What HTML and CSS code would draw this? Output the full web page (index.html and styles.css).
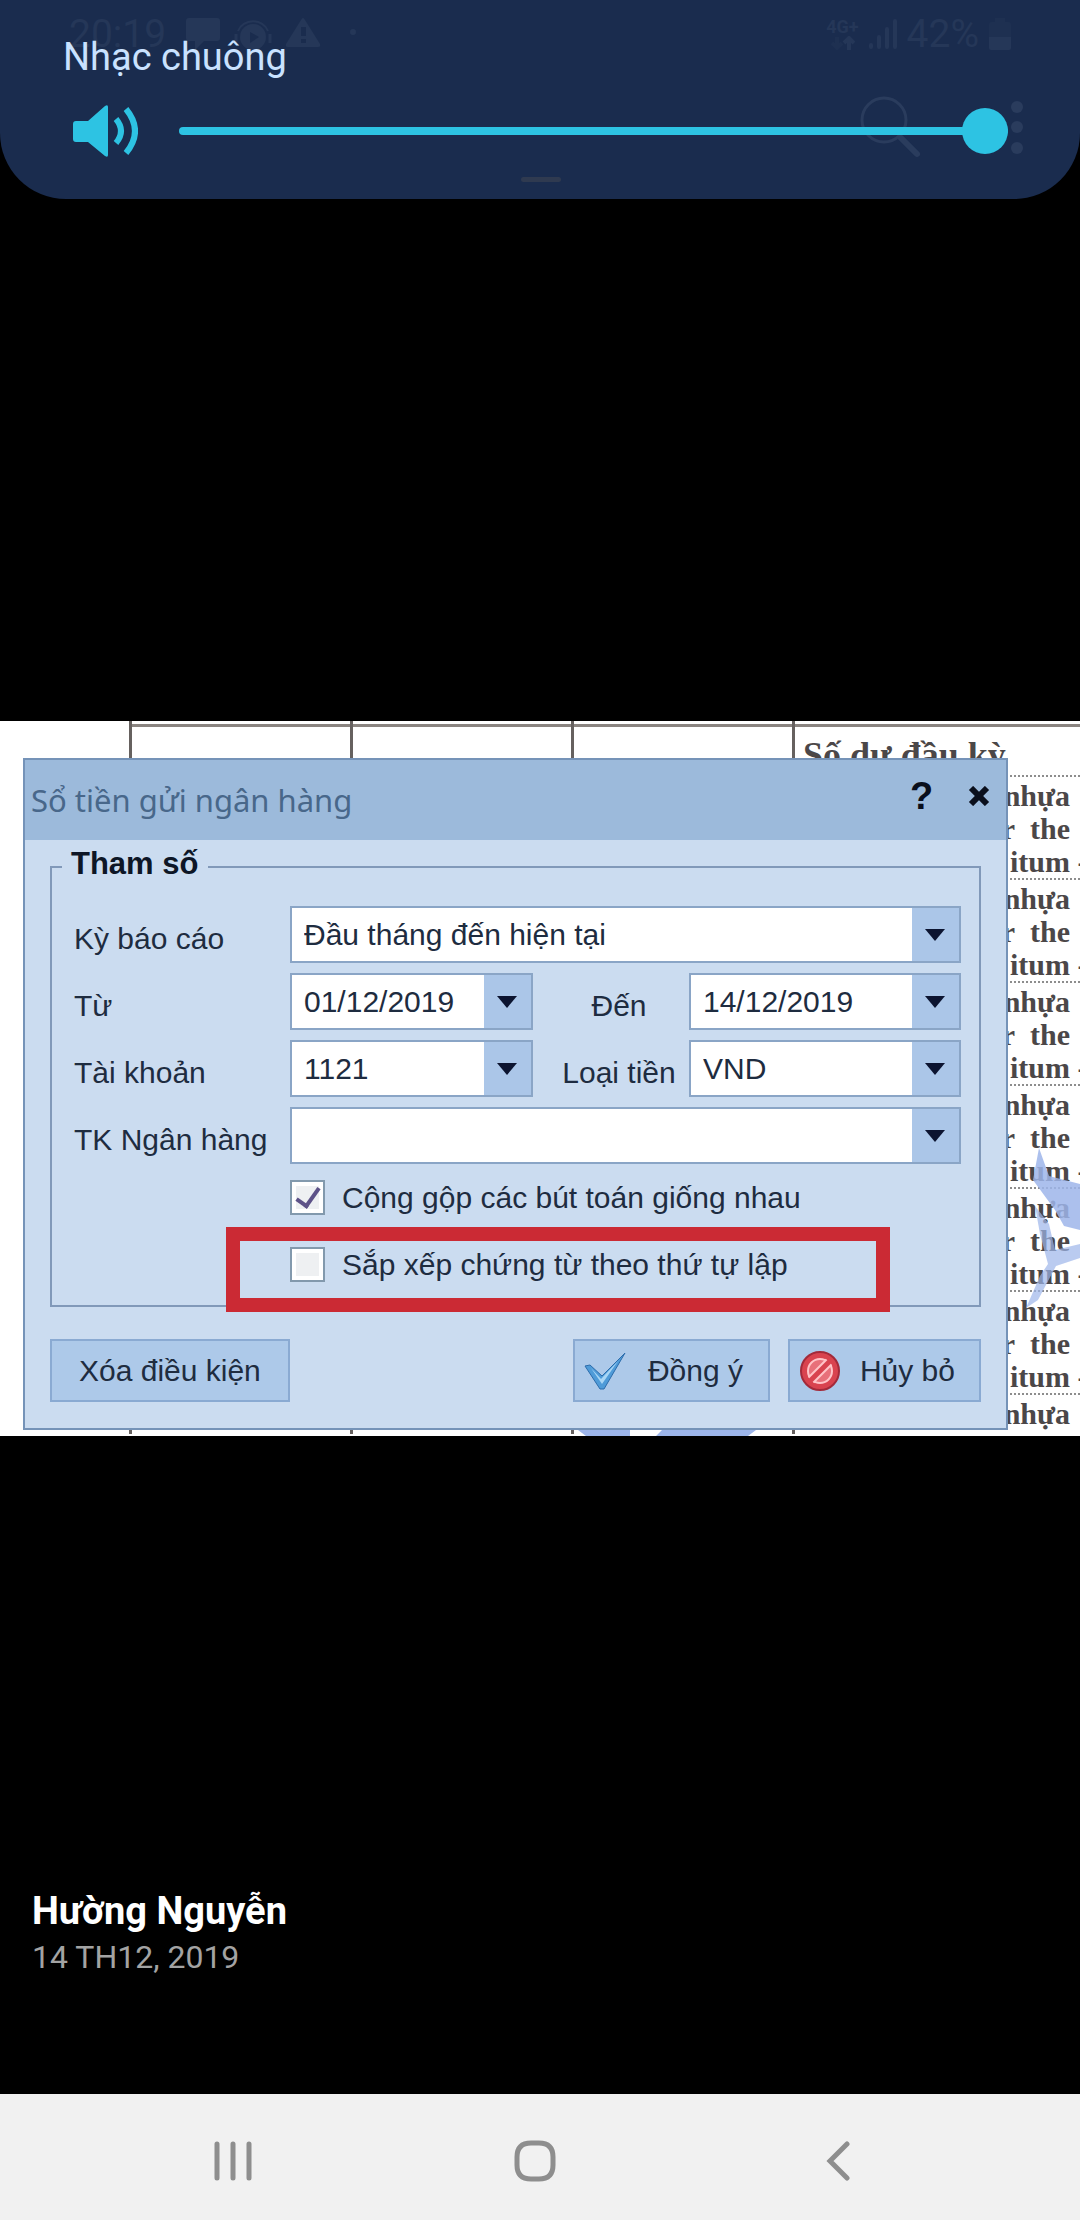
FILE: index.html
```html
<!DOCTYPE html>
<html lang="vi">
<head>
    <meta charset="UTF-8">
    <meta name="viewport" content="width=device-width, initial-scale=1.0">
    <title>Hường Nguyễn</title>
    <link rel="stylesheet" href="styles.css">
</head>
<body>
    <!-- Volume panel, with the dimmed status bar behind it -->
    <header class="volume-panel">
        <div class="status-bar">
            <span class="clock">20:19</span>
            <svg class="status-icons" width="172" height="34" viewBox="0 0 172 34" fill="currentColor">
                <path d="M3 1h28q3 0 3 3v17q0 3-3 3H18L9 33V24H3q-3 0-3-3V4q0-3 3-3z"/>
                <circle cx="67" cy="20" r="13"/>
                <path d="M52 14a16 15 0 0 1 30 0" fill="none" stroke="currentColor" stroke-width="2"/>
                <path d="M50 17v9M84 17v9" stroke="currentColor" stroke-width="3"/>
                <path class="hole" d="M64 15l9 5-9 6z"/>
                <path d="M117 1q1 0 2 2l15 24q1 3-2 3h-30q-3 0-2-3l15-24q1-2 2-2z"/>
                <path class="hole" d="M115 10h5v9h-5zM115 22h5v4h-5z"/>
                <circle cx="167" cy="15" r="3"/>
            </svg>
            <span class="spacer"></span>
            <span class="network">4G+
                <svg width="24" height="14" viewBox="0 0 24 14" fill="none" stroke="currentColor" stroke-width="4">
                    <path d="M6 1v11M1 7l5 5 5-5" opacity=".4"/>
                    <path d="M18 14V2M13 7l5-5 5 5"/>
                </svg>
            </span>
            <svg width="28" height="32" viewBox="0 0 28 32" stroke="currentColor" stroke-width="4" stroke-linecap="round">
                <path d="M2 27v2M10 19v10M18 11v18M26 3v26"/>
            </svg>
            <span class="clock">42%</span>
            <svg width="22" height="34" viewBox="0 0 22 34" fill="currentColor">
                <path d="M6 1h10v4h3q3 0 3 3v12H0V8q0-3 3-3h3z" opacity=".4"/>
                <path d="M0 20h22v11q0 2-2 2H2q-2 0-2-2z"/>
            </svg>
        </div>
        <svg class="toolbar-icons" width="164" height="64" viewBox="0 0 164 64" fill="currentColor">
            <circle cx="24" cy="25" r="22" fill="none" stroke="currentColor" stroke-width="3"/>
            <path d="M41 43l16 16" stroke="currentColor" stroke-width="6" stroke-linecap="round"/>
            <circle cx="157" cy="12" r="6"/>
            <circle cx="157" cy="32" r="6"/>
            <circle cx="157" cy="53" r="6"/>
        </svg>

        <label class="volume-label" for="volume">Nhạc chuông</label>
        <div class="volume-row">
            <svg width="65" height="52" viewBox="0 0 65 52" fill="#2dc3e3">
                <path d="M3 16h12L32 1q3-2 3 1v48q0 3-3 1L15 37H3q-3 0-3-3V19q0-3 3-3z"/>
                <path d="M43 14q10 12 0 24M53 4q18 22 0 44" fill="none" stroke="#2dc3e3" stroke-width="6"/>
            </svg>
            <input type="range" id="volume" min="0" max="100" value="100">
        </div>
        <span class="grip"></span>
    </header>

    <main>
        <section class="photo">
            <!-- Report behind the dialog -->
            <table class="report">
                <tr class="report-top"><td></td><td></td><td></td><td></td></tr>
                <tr class="report-head"><td></td><td></td><td></td><td>Số dư đầu kỳ</td></tr>
                <tr><td></td><td></td><td></td><td><p>nhựa</p><p>r&nbsp; the</p><p class="cut">itum<span>&nbsp;-</span></p></td></tr>
                <tr><td></td><td></td><td></td><td><p>nhựa</p><p>r&nbsp; the</p><p class="cut">itum<span>&nbsp;-</span></p></td></tr>
                <tr><td></td><td></td><td></td><td><p>nhựa</p><p>r&nbsp; the</p><p class="cut">itum<span>&nbsp;-</span></p></td></tr>
                <tr><td></td><td></td><td></td><td><p>nhựa</p><p>r&nbsp; the</p><p class="cut">itum<span>&nbsp;-</span></p></td></tr>
                <tr><td></td><td></td><td></td><td><p>nhựa</p><p>r&nbsp; the</p><p class="cut">itum<span>&nbsp;-</span></p></td></tr>
                <tr><td></td><td></td><td></td><td><p>nhựa</p><p>r&nbsp; the</p><p class="cut">itum<span>&nbsp;-</span></p></td></tr>
                <tr><td></td><td></td><td></td><td><p>nhựa</p></td></tr>
            </table>
            <svg class="watermark" width="73" height="170" viewBox="0 0 73 170" fill="#9db5ea">
                <path d="M32 2l10 28 31 8v46l-16-4-9-16-22-30z" opacity=".85"/>
                <path d="M28 60l14 18 6 26 25-6v14l-24 8-18 34-12 8 14-32 8-12-8-30z" opacity=".7"/>
            </svg>
            <svg class="watermark-foot" width="180" height="6" viewBox="0 0 180 6" fill="#9db5ea">
                <path d="M0 0h52v6H8zM84 0h94l-8 6H78z"/>
            </svg>

            <form class="dialog">
                <div class="title-bar">
                    <h1>Sổ tiền gửi ngân hàng</h1>
                    <button type="button" class="title-btn" aria-label="Trợ giúp">?</button>
                    <button type="button" class="title-btn" aria-label="Đóng">
                        <svg width="22" height="20" viewBox="0 0 22 20" stroke="#0a0f1c" stroke-width="6"><path d="M3 2l16 16M19 2L3 18"/></svg>
                    </button>
                </div>

                <fieldset>
                    <legend>Tham số</legend>
                    <div class="fields">
                        <label for="period">Kỳ báo cáo</label>
                        <div class="combo wide"><select id="period"><option>Đầu tháng đến hiện tại</option></select></div>

                        <label for="from">Từ</label>
                        <div class="combo"><select id="from"><option>01/12/2019</option></select></div>
                        <label for="to" class="second">Đến</label>
                        <div class="combo"><select id="to"><option>14/12/2019</option></select></div>

                        <label for="account">Tài khoản</label>
                        <div class="combo"><select id="account"><option>1121</option></select></div>
                        <label for="currency" class="second">Loại tiền</label>
                        <div class="combo"><select id="currency"><option>VND</option></select></div>

                        <label for="bank">TK Ngân hàng</label>
                        <div class="combo wide"><select id="bank"><option></option></select></div>
                    </div>
                    <div class="checks">
                        <div class="check">
                            <input type="checkbox" id="merge" checked>
                            <label for="merge">Cộng gộp các bút toán giống nhau</label>
                        </div>
                        <div class="check">
                            <input type="checkbox" id="sort">
                            <label for="sort">Sắp xếp chứng từ theo thứ tự lập</label>
                            <span class="highlight"></span>
                        </div>
                    </div>
                </fieldset>

                <div class="actions">
                    <button type="button" class="btn clear">Xóa điều kiện</button>
                    <button type="button" class="btn ok">
                        <svg width="42" height="38" viewBox="0 0 42 38">
                            <path d="M1 14l5-1 12 11L41 1 20 37h-4z" fill="#4f9bd8" stroke="#2c6cab" stroke-width="1"/>
                            <path d="M7 16l10 11L34 9 18 32z" fill="#a9d6f5"/>
                        </svg>
                        Đồng ý
                    </button>
                    <button type="button" class="btn cancel">
                        <svg width="42" height="42" viewBox="0 0 42 42" fill="none">
                            <circle cx="21" cy="21" r="19" fill="#d9434f" stroke="#a32a3a" stroke-width="2"/>
                            <circle cx="21" cy="21" r="12" fill="#e8707a" stroke="#ffc4c8" stroke-width="2"/>
                            <path d="M12 30L30 12" stroke="#ffc4c8" stroke-width="9"/>
                            <path d="M11 31L31 11" stroke="#d9434f" stroke-width="5"/>
                        </svg>
                        Hủy bỏ
                    </button>
                </div>
            </form>
        </section>

        <div class="caption">
            <strong>Hường Nguyễn</strong>
            <time datetime="2019-12-14">14 TH12, 2019</time>
        </div>
    </main>

    <!-- System navigation -->
    <nav class="nav-bar">
        <button type="button" aria-label="Gần đây">
            <svg width="40" height="40" viewBox="0 0 40 40"><path d="M4 3v34M20 3v34M36 3v34"/></svg>
        </button>
        <button type="button" aria-label="Trang chủ">
            <svg width="42" height="42" viewBox="0 0 42 42"><path d="M21 3h4q14 0 14 14v8q0 14-14 14h-8q-14 0-14-14v-8q0-14 14-14z"/></svg>
        </button>
        <button type="button" aria-label="Quay lại">
            <svg width="24" height="40" viewBox="0 0 24 40"><path d="M21 3L4 20l17 17"/></svg>
        </button>
    </nav>
</body>
</html>
```
FILE: styles.css
```css
* {
    box-sizing: border-box;
}

body {
    margin: 0;
    min-height: 100vh;
    display: flex;
    flex-direction: column;
    background-color: black;
    color: white;
    font-family: Roboto, "Noto Sans", sans-serif;
}

button {
    border: none;
    background: none;
    padding: 0;
    font: inherit;
    color: inherit;
}

svg {
    display: block;
    flex: none;
}

p {
    margin: 0;
}

/* Volume panel */
.volume-panel {
    position: relative;
    padding: 33px 72px 17px 73px;
    background-color: #1a2c4e;
    border-radius: 0 0 66px 66px;
    color: #c9e2ff;
}

.volume-label {
    display: block;
    margin-left: -10px;
    font-size: 38px;
    line-height: 48px;
    position: relative;
}

.volume-row {
    display: flex;
    align-items: center;
    gap: 41px;
    margin: 24px 0 20px;
    position: relative;
}

.volume-row input {
    flex: 1;
    min-width: 0;
    height: 46px;
    margin: 0;
    appearance: none;
    background: none;
}

.volume-row input::-webkit-slider-runnable-track {
    height: 8px;
    border-radius: 4px;
    background-color: #2dc3e3;
}

.volume-row input::-webkit-slider-thumb {
    appearance: none;
    width: 46px;
    height: 46px;
    margin-top: -19px;
    border-radius: 50%;
    background-color: #2dc3e3;
}

.grip {
    display: block;
    width: 40px;
    height: 5px;
    margin: 0 auto;
    border-radius: 3px;
    background-color: #2f3a50;
}

.status-bar {
    position: absolute;
    top: 11px;
    left: 69px;
    right: 69px;
    display: flex;
    align-items: center;
    gap: 10px;
    color: #253758;
}

.clock {
    font-size: 39px;
    line-height: 46px;
}

.status-icons {
    margin-left: 10px;
}

.hole {
    fill: #1a2c4e;
}

.spacer {
    flex: 1;
}

.network {
    font-size: 18px;
    line-height: 18px;
    font-weight: bold;
}

.network svg {
    margin-left: 5px;
}

.toolbar-icons {
    position: absolute;
    top: 95px;
    right: 56px;
    color: #2a3c5d;
}

main {
    flex: 1;
    display: flex;
    flex-direction: column;
    justify-content: space-between;
    padding: 522px 0 116px;
}

/* Shared picture */
.photo {
    position: relative;
    display: grid;
    align-items: start;
    background-color: white;
    overflow: hidden;
    font-family: "Liberation Sans", Arial, sans-serif;
    font-size: 30px;
    color: #1e2c40;
}

.report,
.dialog {
    grid-area: 1 / 1;
}

.report {
    margin-left: 129px;
    border-collapse: collapse;
    table-layout: fixed;
    width: calc(100% - 129px);
    font-family: "Liberation Serif", "Times New Roman", serif;
    font-weight: bold;
    line-height: 33px;
    color: #4b4748;
}

.report td {
    padding: 2px 0 0;
    vertical-align: top;
    text-align: right;
    border-left: 3px solid #66615f;
    border-top: 2px dotted #8d8d8d;
}

.report td:not(:last-child) {
    width: 221px;
}

.report p {
    padding-right: 10px;
}

.report .cut {
    padding-right: 0;
    white-space: nowrap;
}

.cut span {
    display: inline-block;
    width: 10px;
}

.report .report-top td {
    height: 4px;
    padding: 0;
    border-top: none;
}

.report .report-head td {
    height: 51px;
    padding: 8px 0 0 8px;
    text-align: left;
    font-size: 36px;
    line-height: 40px;
    border-top: 3px solid #8a8480;
}

.report tr:last-child td {
    height: 40px;
}

.watermark {
    position: absolute;
    right: 0;
    top: 425px;
}

.watermark-foot {
    position: absolute;
    left: 578px;
    bottom: 0;
}

/* Dialog */
.dialog {
    position: relative;
    margin: 37px 72px 6px 23px;
    border: 2px solid #7593b8;
    background-color: #cbdcf0;
}

.title-bar {
    display: flex;
    align-items: center;
    height: 80px;
    padding: 0 16px 8px 6px;
    background-color: #9cbadb;
}

.title-bar h1 {
    flex: 1;
    margin: 0;
    padding-top: 8px;
    font-family: "Noto Sans", "Open Sans", sans-serif;
    font-size: 31px;
    font-weight: normal;
    color: #48678a;
}

.title-btn {
    display: grid;
    place-items: center;
    width: 22px;
    margin-left: 36px;
    font-size: 38px;
    font-weight: bold;
    color: #0a0f1c;
}

fieldset {
    margin: 8px 25px 0;
    padding: 20px 18px 17px 22px;
    border: 2px solid #8199b9;
    min-width: 0;
}

legend {
    margin-left: -12px;
    padding: 0 10px 6px 9px;
    font-size: 31px;
    line-height: 32px;
    font-weight: bold;
    color: #0d1626;
}

.fields {
    display: grid;
    grid-template-columns: 216px 243px 156px 1fr;
    grid-auto-rows: 57px;
    gap: 10px 0;
}

.fields label {
    align-self: center;
    padding-top: 8px;
}

.fields .second {
    padding-left: 16px;
    text-align: center;
}

.combo {
    position: relative;
}

.combo.wide {
    grid-column: 2 / -1;
}

.combo select {
    width: 100%;
    height: 100%;
    appearance: none;
    padding: 0 52px 0 12px;
    border: 2px solid #8aa5c6;
    border-radius: 0;
    background: linear-gradient(#abc6e8, #abc6e8) right / 47px 100% no-repeat white;
    font: inherit;
    color: inherit;
}

.combo::after {
    content: "";
    position: absolute;
    right: 16px;
    top: 23px;
    border: 10px solid transparent;
    border-top: 12px solid #0c1430;
    border-bottom: none;
    pointer-events: none;
}

.checks {
    display: grid;
    gap: 20px;
    margin: 10px 0 0 216px;
}

.check {
    position: relative;
    display: flex;
    align-items: center;
    gap: 17px;
    height: 47px;
}

.check input {
    display: grid;
    place-items: center;
    width: 35px;
    height: 35px;
    margin: 0;
    appearance: none;
    border: 2px solid #8299ad;
    background-color: #eef0f2;
    box-shadow: inset 0 0 0 4px white;
}

.check input:checked::before {
    content: "";
    width: 10px;
    height: 20px;
    margin-bottom: 5px;
    border: solid #5d5288;
    border-width: 0 4px 4px 0;
    transform: rotate(35deg);
}

.highlight {
    position: absolute;
    top: -14px;
    bottom: -24px;
    left: -64px;
    right: 71px;
    border: 14px solid #cb2a34;
    pointer-events: none;
}

.actions {
    display: flex;
    gap: 18px;
    padding: 32px 25px 26px;
}

.btn {
    display: flex;
    align-items: center;
    height: 63px;
    border: 2px solid #8aaad2;
    background-color: #adc9e9;
}

.clear {
    padding: 0 27px;
    margin-right: auto;
}

.ok {
    gap: 22px;
    padding: 0 25px 0 9px;
}

.cancel {
    gap: 19px;
    padding: 0 24px 0 9px;
}

/* Sender */
.caption {
    padding-left: 32px;
}

.caption strong {
    display: block;
    font-size: 38px;
    line-height: 50px;
}

.caption time {
    display: block;
    font-size: 32px;
    line-height: 42px;
    color: #a3a3a3;
}

/* Navigation bar */
.nav-bar {
    display: grid;
    grid-template-columns: repeat(3, 1fr);
    height: 126px;
    padding: 8px 91px 0 82px;
    background-color: #f1f1f1;
}

.nav-bar button {
    display: grid;
    place-items: center;
}

.nav-bar path {
    fill: none;
    stroke: #8e8e8e;
    stroke-width: 5;
    stroke-linecap: round;
}
```
